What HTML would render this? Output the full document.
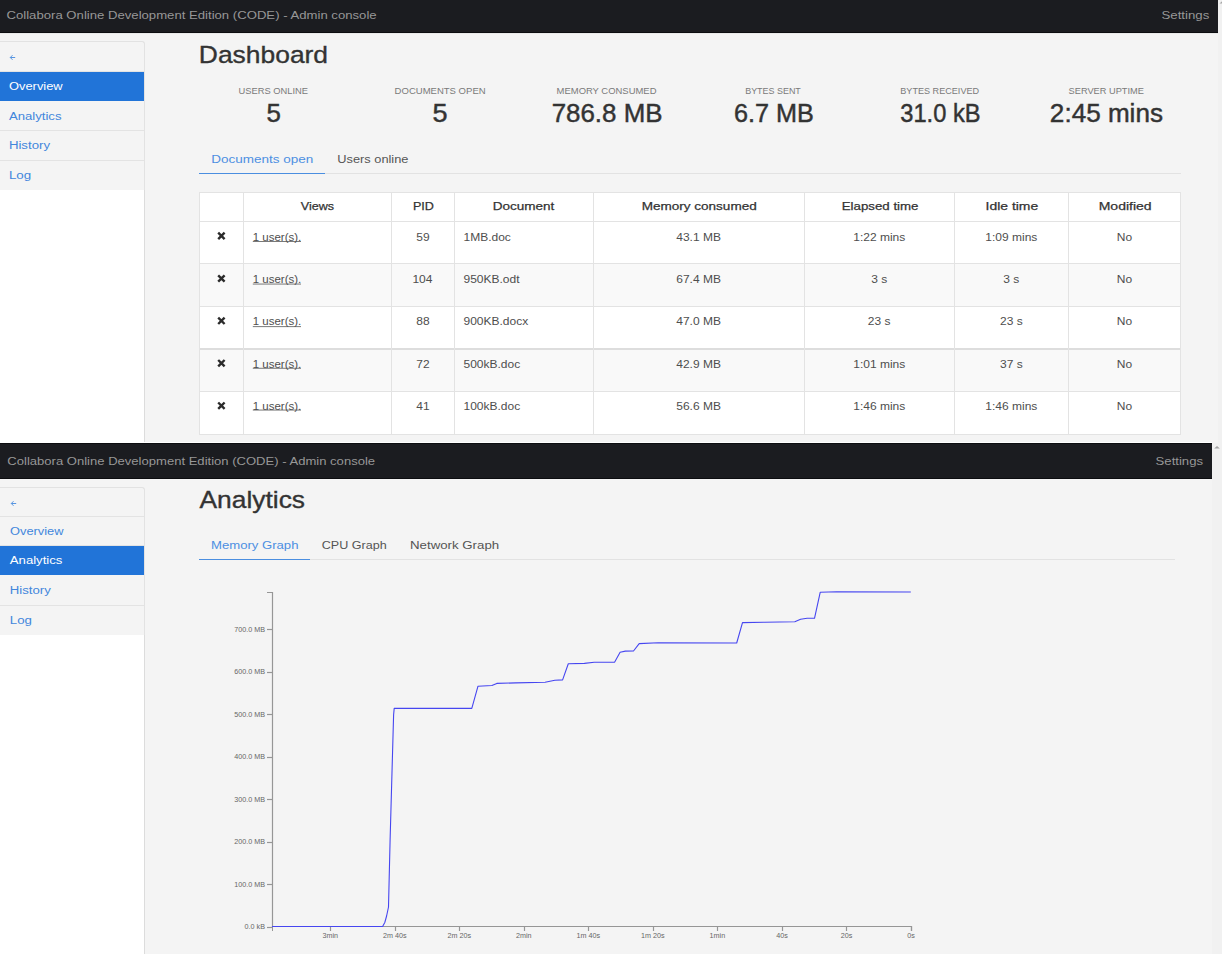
<!DOCTYPE html>
<html><head><meta charset="utf-8">
<style>
html,body{margin:0;padding:0;}
body{width:1222px;height:954px;position:relative;overflow:hidden;background:#f4f4f4;font-family:"Liberation Sans",sans-serif;}
.a{position:absolute;}
.bar{background:#1b1c20;}
.sb{background:#f4f4f4;}
.ln{background:#e3e3e3;}
svg{position:absolute;left:0;top:0;}
text{font-family:"Liberation Sans",sans-serif;}
</style></head><body>
<!-- SECTION 1 -->
<div class="a" style="left:0;top:0;width:1222px;height:443px;background:#f4f4f4"></div>
<div class="a bar" style="left:0;top:0;width:1218px;height:32px;border-bottom:1px solid #0c0d10;"></div>
<div class="a" style="left:1218px;top:0;width:4px;height:443px;background:#f1f1f1"></div>
<svg class="a" width="6" height="8" style="left:1218px;top:0"><path d="M1.5,3.6 L3.8,1.4 L6,3.6 Z" fill="#a3a3a3"/></svg>
<div class="a" style="left:0;top:33px;width:1218px;height:1px;background:#e9e9e9"></div>
<!-- sidebar column -->
<div class="a" style="left:0;top:190px;width:144px;height:253px;background:#ffffff"></div>
<div class="a" style="left:144px;top:44px;width:1px;height:399px;background:#dcdcdc"></div>
<div class="a" style="left:-5px;top:41px;width:148px;height:148px;border:1px solid #e2e2e2;border-bottom:none;border-radius:3px 3px 0 0;background:#f4f4f4"></div>
<div class="a ln" style="left:0;top:71px;width:144px;height:1px"></div>
<div class="a" style="left:0;top:72px;width:144px;height:29px;background:#2174d8"></div>
<div class="a ln" style="left:0;top:130px;width:144px;height:1px"></div>
<div class="a ln" style="left:0;top:160px;width:144px;height:1px"></div>
<!-- back arrow -->
<svg class="a" width="20" height="20" style="left:6px;top:48px"><path d="M4.4,9.5 H9.2 M6.5,7.2 L4.3,9.5 L6.5,11.8" fill="none" stroke="#4489de" stroke-width="0.9"/></svg>
<!-- tabs line -->
<div class="a" style="left:199px;top:173px;width:982px;height:1px;background:#e2e2e2"></div>
<div class="a" style="left:199px;top:172.5px;width:126px;height:1.5px;background:#4a8ee0"></div>
<!-- table -->
<div class="a" style="left:199px;top:192px;width:982px;height:243px;background:#ffffff"></div>
<div class="a" style="left:199px;top:264px;width:982px;height:42px;background:#f9f9f9"></div>
<div class="a" style="left:199px;top:350px;width:982px;height:42px;background:#f9f9f9"></div>
<!-- horizontal borders -->
<div class="a ln" style="left:199px;top:192px;width:982px;height:1px"></div>
<div class="a ln" style="left:199px;top:221px;width:982px;height:1px"></div>
<div class="a ln" style="left:199px;top:263px;width:982px;height:1px"></div>
<div class="a ln" style="left:199px;top:306px;width:982px;height:1px"></div>
<div class="a" style="left:199px;top:348px;width:982px;height:2px;background:#dddddd"></div>
<div class="a ln" style="left:199px;top:391px;width:982px;height:1px"></div>
<div class="a ln" style="left:199px;top:434px;width:982px;height:1px"></div>
<!-- vertical borders -->
<div class="a ln" style="left:199px;top:192px;width:1px;height:243px"></div>
<div class="a ln" style="left:243px;top:192px;width:1px;height:243px"></div>
<div class="a ln" style="left:391px;top:192px;width:1px;height:243px"></div>
<div class="a ln" style="left:454px;top:192px;width:1px;height:243px"></div>
<div class="a ln" style="left:593px;top:192px;width:1px;height:243px"></div>
<div class="a ln" style="left:804px;top:192px;width:1px;height:243px"></div>
<div class="a ln" style="left:954px;top:192px;width:1px;height:243px"></div>
<div class="a ln" style="left:1068px;top:192px;width:1px;height:243px"></div>
<div class="a ln" style="left:1180px;top:192px;width:1px;height:243px"></div>
<!-- x icons & underlines -->
<svg class="a" style="left:0;top:0" width="1222" height="443">
<g stroke="#2b2b2b" stroke-width="2.4" stroke-linecap="butt">
<path d="M218.2,232.7 L224.6,239.1 M224.6,232.7 L218.2,239.1"/>
<path d="M218.2,275.3 L224.6,281.7 M224.6,275.3 L218.2,281.7"/>
<path d="M218.2,317.6 L224.6,324.0 M224.6,317.6 L218.2,324.0"/>
<path d="M218.2,360.0 L224.6,366.4 M224.6,360.0 L218.2,366.4"/>
<path d="M218.2,402.5 L224.6,408.9 M224.6,402.5 L218.2,408.9"/>
</g>
<g fill="#6a6a6a">
<rect x="252.8" y="241" width="48.2" height="0.9"/>
<rect x="252.8" y="283.6" width="48.2" height="0.9"/>
<rect x="252.8" y="326.2" width="48.2" height="0.9"/>
<rect x="252.8" y="367.8" width="48.2" height="0.9"/>
<rect x="252.8" y="409.6" width="48.2" height="0.9"/>
</g>
</svg>

<!-- SECTION 2 -->
<div class="a" style="left:0;top:443px;width:1222px;height:511px;background:#f4f4f4"></div>
<div class="a" style="left:0;top:441px;width:144px;height:2px;background:#ffffff"></div>
<div class="a" style="left:0;top:442px;width:1212px;height:1px;background:#ffffff"></div>
<div class="a bar" style="left:0;top:443px;width:1212px;height:36px;border-top:1px solid #0c0d10;box-sizing:border-box;"></div>
<div class="a" style="left:0;top:478px;width:1212px;height:1px;background:#0c0d10"></div>
<div class="a" style="left:1212px;top:443px;width:10px;height:511px;background:#f1f1f1"></div>
<svg class="a" width="10" height="10" style="left:1212px;top:443px"><path d="M2.2,5.6 L5,2.9 L7.8,5.6 Z" fill="#a3a3a3"/></svg>
<div class="a" style="left:0;top:634px;width:144px;height:320px;background:#ffffff"></div>
<div class="a" style="left:144px;top:490px;width:1px;height:464px;background:#dcdcdc"></div>
<div class="a" style="left:-5px;top:487px;width:148px;height:147px;border:1px solid #e2e2e2;border-bottom:none;border-radius:3px 3px 0 0;background:#f4f4f4"></div>
<div class="a ln" style="left:0;top:516px;width:144px;height:1px"></div>
<div class="a ln" style="left:0;top:545px;width:144px;height:1px"></div>
<div class="a" style="left:0;top:546px;width:144px;height:29px;background:#2174d8"></div>
<div class="a ln" style="left:0;top:605px;width:144px;height:1px"></div>
<svg class="a" width="20" height="20" style="left:6.8px;top:493.5px"><path d="M4.4,9.5 H9.2 M6.5,7.2 L4.3,9.5 L6.5,11.8" fill="none" stroke="#4489de" stroke-width="0.9"/></svg>
<div class="a" style="left:199px;top:559px;width:976px;height:1px;background:#e2e2e2"></div>
<div class="a" style="left:199px;top:558.5px;width:111px;height:1.5px;background:#4a8ee0"></div>

<svg width="1222" height="954" style="left:0;top:0">
<path d="M267,592.5 H272.5 V926.5 H911.5 V931" fill="none" stroke="#969696" stroke-width="1.2"/>
<path d="M267,927.5 H272" stroke="#969696" stroke-width="1.2"/>
<path d="M267,884.5 H272" stroke="#969696" stroke-width="1.2"/>
<path d="M267,842.5 H272" stroke="#969696" stroke-width="1.2"/>
<path d="M267,799.5 H272" stroke="#969696" stroke-width="1.2"/>
<path d="M267,757.5 H272" stroke="#969696" stroke-width="1.2"/>
<path d="M267,714.5 H272" stroke="#969696" stroke-width="1.2"/>
<path d="M267,672.5 H272" stroke="#969696" stroke-width="1.2"/>
<path d="M267,629.5 H272" stroke="#969696" stroke-width="1.2"/>
<path d="M911.5,926.5 V931" stroke="#969696" stroke-width="1.2"/>
<path d="M846.5,926.5 V931" stroke="#969696" stroke-width="1.2"/>
<path d="M782.5,926.5 V931" stroke="#969696" stroke-width="1.2"/>
<path d="M717.5,926.5 V931" stroke="#969696" stroke-width="1.2"/>
<path d="M653.5,926.5 V931" stroke="#969696" stroke-width="1.2"/>
<path d="M588.5,926.5 V931" stroke="#969696" stroke-width="1.2"/>
<path d="M524.5,926.5 V931" stroke="#969696" stroke-width="1.2"/>
<path d="M459.5,926.5 V931" stroke="#969696" stroke-width="1.2"/>
<path d="M395.5,926.5 V931" stroke="#969696" stroke-width="1.2"/>
<path d="M330.5,926.5 V931" stroke="#969696" stroke-width="1.2"/>
<path d="M272.5,931 V926" stroke="#969696" stroke-width="1"/>
<path d="M272.0,926.5 L382.6,926.4 L384.8,922.5 L386.6,916.0 L388.5,907.0 L390.1,840.0 L392.9,740.0 L393.6,715.0 L394.2,708.4 L471.8,708.4 L478.0,686.2 L491.9,685.5 L496.8,683.4 L515.6,682.9 L545.1,682.2 L554.9,680.3 L562.6,679.9 L568.3,663.7 L584.4,663.4 L594.2,662.3 L614.7,662.1 L620.1,652.3 L625.3,651.1 L633.5,651.0 L639.2,643.6 L658.2,642.8 L736.7,643.0 L742.5,622.6 L764.6,622.2 L794.8,621.7 L800.6,619.3 L807.1,618.3 L814.5,618.3 L820.2,592.3 L836.6,591.8 L910.8,592.0" fill="none" stroke="#4646f0" stroke-width="1.1" stroke-linejoin="round"/>
<text x="6.50" y="19.40" textLength="370.11" lengthAdjust="spacingAndGlyphs" font-size="11.6" fill="#979797">Collabora Online Development Edition (CODE) - Admin console</text>
<text x="1161.50" y="19.15" textLength="47.77" lengthAdjust="spacingAndGlyphs" font-size="11.6" fill="#979797">Settings</text>
<text x="9.00" y="90.00" textLength="53.68" lengthAdjust="spacingAndGlyphs" font-size="11.7" fill="#ffffff">Overview</text>
<text x="8.90" y="119.50" textLength="52.62" lengthAdjust="spacingAndGlyphs" font-size="11.7" fill="#4286dc">Analytics</text>
<text x="8.90" y="149.00" textLength="41.12" lengthAdjust="spacingAndGlyphs" font-size="11.7" fill="#4286dc">History</text>
<text x="8.90" y="178.50" textLength="22.27" lengthAdjust="spacingAndGlyphs" font-size="11.7" fill="#4286dc">Log</text>
<text x="198.84" y="63.00" textLength="129.23" lengthAdjust="spacingAndGlyphs" font-size="24.5" fill="#333333" stroke="#333333" stroke-width="0.35">Dashboard</text>
<text x="238.50" y="94.10" textLength="69.50" lengthAdjust="spacingAndGlyphs" font-size="9" fill="#7a7a7a">USERS ONLINE</text>
<text x="266.58" y="122.10" textLength="14.40" lengthAdjust="spacingAndGlyphs" font-size="25.5" fill="#333333" stroke="#333333" stroke-width="0.45">5</text>
<text x="394.60" y="94.10" textLength="91.03" lengthAdjust="spacingAndGlyphs" font-size="9" fill="#7a7a7a">DOCUMENTS OPEN</text>
<text x="432.44" y="122.10" textLength="15.05" lengthAdjust="spacingAndGlyphs" font-size="25.5" fill="#333333" stroke="#333333" stroke-width="0.45">5</text>
<text x="556.60" y="94.10" textLength="99.88" lengthAdjust="spacingAndGlyphs" font-size="9" fill="#7a7a7a">MEMORY CONSUMED</text>
<text x="551.68" y="122.10" textLength="110.84" lengthAdjust="spacingAndGlyphs" font-size="25.5" fill="#333333" stroke="#333333" stroke-width="0.45">786.8 MB</text>
<text x="745.20" y="94.10" textLength="55.60" lengthAdjust="spacingAndGlyphs" font-size="9" fill="#7a7a7a">BYTES SENT</text>
<text x="733.91" y="122.10" textLength="79.89" lengthAdjust="spacingAndGlyphs" font-size="25.5" fill="#333333" stroke="#333333" stroke-width="0.45">6.7 MB</text>
<text x="900.30" y="94.10" textLength="78.79" lengthAdjust="spacingAndGlyphs" font-size="9" fill="#7a7a7a">BYTES RECEIVED</text>
<text x="900.30" y="122.10" textLength="80.24" lengthAdjust="spacingAndGlyphs" font-size="25.5" fill="#333333" stroke="#333333" stroke-width="0.45">31.0 kB</text>
<text x="1068.60" y="94.10" textLength="75.30" lengthAdjust="spacingAndGlyphs" font-size="9" fill="#7a7a7a">SERVER UPTIME</text>
<text x="1049.88" y="122.10" textLength="113.09" lengthAdjust="spacingAndGlyphs" font-size="25.5" fill="#333333" stroke="#333333" stroke-width="0.45">2:45 mins</text>
<text x="211.20" y="162.80" textLength="102.06" lengthAdjust="spacingAndGlyphs" font-size="11.5" fill="#4c8fe2">Documents open</text>
<text x="337.30" y="162.80" textLength="71.14" lengthAdjust="spacingAndGlyphs" font-size="11.5" fill="#555555">Users online</text>
<text x="300.80" y="210.30" textLength="33.28" lengthAdjust="spacingAndGlyphs" font-size="11.6" fill="#333333" stroke="#333333" stroke-width="0.25">Views</text>
<text x="412.90" y="210.30" textLength="21.00" lengthAdjust="spacingAndGlyphs" font-size="11.6" fill="#333333" stroke="#333333" stroke-width="0.25">PID</text>
<text x="492.70" y="210.30" textLength="61.69" lengthAdjust="spacingAndGlyphs" font-size="11.6" fill="#333333" stroke="#333333" stroke-width="0.25">Document</text>
<text x="641.70" y="210.30" textLength="115.02" lengthAdjust="spacingAndGlyphs" font-size="11.6" fill="#333333" stroke="#333333" stroke-width="0.25">Memory consumed</text>
<text x="841.70" y="210.30" textLength="76.81" lengthAdjust="spacingAndGlyphs" font-size="11.6" fill="#333333" stroke="#333333" stroke-width="0.25">Elapsed time</text>
<text x="985.60" y="210.30" textLength="52.64" lengthAdjust="spacingAndGlyphs" font-size="11.6" fill="#333333" stroke="#333333" stroke-width="0.25">Idle time</text>
<text x="1098.70" y="210.30" textLength="52.94" lengthAdjust="spacingAndGlyphs" font-size="11.6" fill="#333333" stroke="#333333" stroke-width="0.25">Modified</text>
<text x="252.80" y="240.50" textLength="48.39" lengthAdjust="spacingAndGlyphs" font-size="11.5" fill="#4e4e4e">1 user(s).</text>
<text x="416.29" y="240.50" textLength="13.34" lengthAdjust="spacingAndGlyphs" font-size="11.5" fill="#4e4e4e">59</text>
<text x="463.50" y="240.50" textLength="47.33" lengthAdjust="spacingAndGlyphs" font-size="11.5" fill="#4e4e4e">1MB.doc</text>
<text x="676.24" y="240.50" textLength="44.67" lengthAdjust="spacingAndGlyphs" font-size="11.5" fill="#4e4e4e">43.1 MB</text>
<text x="853.22" y="240.50" textLength="52.00" lengthAdjust="spacingAndGlyphs" font-size="11.5" fill="#4e4e4e">1:22 mins</text>
<text x="985.32" y="240.50" textLength="52.00" lengthAdjust="spacingAndGlyphs" font-size="11.5" fill="#4e4e4e">1:09 mins</text>
<text x="1116.89" y="240.50" textLength="15.33" lengthAdjust="spacingAndGlyphs" font-size="11.5" fill="#4e4e4e">No</text>
<text x="252.80" y="283.10" textLength="48.39" lengthAdjust="spacingAndGlyphs" font-size="11.5" fill="#4e4e4e">1 user(s).</text>
<text x="412.43" y="283.10" textLength="20.01" lengthAdjust="spacingAndGlyphs" font-size="11.5" fill="#4e4e4e">104</text>
<text x="463.50" y="283.10" textLength="56.02" lengthAdjust="spacingAndGlyphs" font-size="11.5" fill="#4e4e4e">950KB.odt</text>
<text x="676.24" y="283.10" textLength="44.67" lengthAdjust="spacingAndGlyphs" font-size="11.5" fill="#4e4e4e">67.4 MB</text>
<text x="871.22" y="283.10" textLength="16.00" lengthAdjust="spacingAndGlyphs" font-size="11.5" fill="#4e4e4e">3 s</text>
<text x="1003.32" y="283.10" textLength="16.00" lengthAdjust="spacingAndGlyphs" font-size="11.5" fill="#4e4e4e">3 s</text>
<text x="1116.89" y="283.10" textLength="15.33" lengthAdjust="spacingAndGlyphs" font-size="11.5" fill="#4e4e4e">No</text>
<text x="252.80" y="325.40" textLength="48.39" lengthAdjust="spacingAndGlyphs" font-size="11.5" fill="#4e4e4e">1 user(s).</text>
<text x="416.29" y="325.40" textLength="13.34" lengthAdjust="spacingAndGlyphs" font-size="11.5" fill="#4e4e4e">88</text>
<text x="463.50" y="325.40" textLength="64.68" lengthAdjust="spacingAndGlyphs" font-size="11.5" fill="#4e4e4e">900KB.docx</text>
<text x="676.24" y="325.40" textLength="44.67" lengthAdjust="spacingAndGlyphs" font-size="11.5" fill="#4e4e4e">47.0 MB</text>
<text x="867.88" y="325.40" textLength="22.67" lengthAdjust="spacingAndGlyphs" font-size="11.5" fill="#4e4e4e">23 s</text>
<text x="999.98" y="325.40" textLength="22.67" lengthAdjust="spacingAndGlyphs" font-size="11.5" fill="#4e4e4e">23 s</text>
<text x="1116.89" y="325.40" textLength="15.33" lengthAdjust="spacingAndGlyphs" font-size="11.5" fill="#4e4e4e">No</text>
<text x="252.80" y="367.80" textLength="48.39" lengthAdjust="spacingAndGlyphs" font-size="11.5" fill="#4e4e4e">1 user(s).</text>
<text x="416.29" y="367.80" textLength="13.34" lengthAdjust="spacingAndGlyphs" font-size="11.5" fill="#4e4e4e">72</text>
<text x="463.50" y="367.80" textLength="56.68" lengthAdjust="spacingAndGlyphs" font-size="11.5" fill="#4e4e4e">500kB.doc</text>
<text x="676.24" y="367.80" textLength="44.67" lengthAdjust="spacingAndGlyphs" font-size="11.5" fill="#4e4e4e">42.9 MB</text>
<text x="853.22" y="367.80" textLength="52.00" lengthAdjust="spacingAndGlyphs" font-size="11.5" fill="#4e4e4e">1:01 mins</text>
<text x="999.98" y="367.80" textLength="22.67" lengthAdjust="spacingAndGlyphs" font-size="11.5" fill="#4e4e4e">37 s</text>
<text x="1116.89" y="367.80" textLength="15.33" lengthAdjust="spacingAndGlyphs" font-size="11.5" fill="#4e4e4e">No</text>
<text x="252.80" y="410.30" textLength="48.39" lengthAdjust="spacingAndGlyphs" font-size="11.5" fill="#4e4e4e">1 user(s).</text>
<text x="416.29" y="410.30" textLength="13.34" lengthAdjust="spacingAndGlyphs" font-size="11.5" fill="#4e4e4e">41</text>
<text x="463.50" y="410.30" textLength="56.68" lengthAdjust="spacingAndGlyphs" font-size="11.5" fill="#4e4e4e">100kB.doc</text>
<text x="676.24" y="410.30" textLength="44.67" lengthAdjust="spacingAndGlyphs" font-size="11.5" fill="#4e4e4e">56.6 MB</text>
<text x="853.22" y="410.30" textLength="52.00" lengthAdjust="spacingAndGlyphs" font-size="11.5" fill="#4e4e4e">1:46 mins</text>
<text x="985.32" y="410.30" textLength="52.00" lengthAdjust="spacingAndGlyphs" font-size="11.5" fill="#4e4e4e">1:46 mins</text>
<text x="1116.89" y="410.30" textLength="15.33" lengthAdjust="spacingAndGlyphs" font-size="11.5" fill="#4e4e4e">No</text>
<text x="7.30" y="465.10" textLength="367.80" lengthAdjust="spacingAndGlyphs" font-size="11.6" fill="#979797">Collabora Online Development Edition (CODE) - Admin console</text>
<text x="1155.60" y="464.70" textLength="47.47" lengthAdjust="spacingAndGlyphs" font-size="11.6" fill="#979797">Settings</text>
<text x="10.00" y="535.30" textLength="53.49" lengthAdjust="spacingAndGlyphs" font-size="11.7" fill="#4286dc">Overview</text>
<text x="9.80" y="564.30" textLength="52.62" lengthAdjust="spacingAndGlyphs" font-size="11.7" fill="#ffffff">Analytics</text>
<text x="9.80" y="594.00" textLength="40.92" lengthAdjust="spacingAndGlyphs" font-size="11.7" fill="#4286dc">History</text>
<text x="9.80" y="623.50" textLength="22.07" lengthAdjust="spacingAndGlyphs" font-size="11.7" fill="#4286dc">Log</text>
<text x="199.50" y="508.40" textLength="105.57" lengthAdjust="spacingAndGlyphs" font-size="24.5" fill="#333333" stroke="#333333" stroke-width="0.35">Analytics</text>
<text x="211.00" y="549.20" textLength="87.45" lengthAdjust="spacingAndGlyphs" font-size="11.5" fill="#4c8fe2">Memory Graph</text>
<text x="321.80" y="549.20" textLength="64.93" lengthAdjust="spacingAndGlyphs" font-size="11.5" fill="#555555">CPU Graph</text>
<text x="410.00" y="549.20" textLength="89.16" lengthAdjust="spacingAndGlyphs" font-size="11.5" fill="#555555">Network Graph</text>
<text x="265" y="929.20" text-anchor="end" font-size="7.2" fill="#666666">0.0 kB</text>
<text x="265" y="886.70" text-anchor="end" font-size="7.2" fill="#666666">100.0 MB</text>
<text x="265" y="844.20" text-anchor="end" font-size="7.2" fill="#666666">200.0 MB</text>
<text x="265" y="801.70" text-anchor="end" font-size="7.2" fill="#666666">300.0 MB</text>
<text x="265" y="759.20" text-anchor="end" font-size="7.2" fill="#666666">400.0 MB</text>
<text x="265" y="716.70" text-anchor="end" font-size="7.2" fill="#666666">500.0 MB</text>
<text x="265" y="674.20" text-anchor="end" font-size="7.2" fill="#666666">600.0 MB</text>
<text x="265" y="631.70" text-anchor="end" font-size="7.2" fill="#666666">700.0 MB</text>
<text x="911.00" y="938.4" text-anchor="middle" font-size="7.2" fill="#666666">0s</text>
<text x="846.47" y="938.4" text-anchor="middle" font-size="7.2" fill="#666666">20s</text>
<text x="781.94" y="938.4" text-anchor="middle" font-size="7.2" fill="#666666">40s</text>
<text x="717.41" y="938.4" text-anchor="middle" font-size="7.2" fill="#666666">1min</text>
<text x="652.88" y="938.4" text-anchor="middle" font-size="7.2" fill="#666666">1m 20s</text>
<text x="588.35" y="938.4" text-anchor="middle" font-size="7.2" fill="#666666">1m 40s</text>
<text x="523.82" y="938.4" text-anchor="middle" font-size="7.2" fill="#666666">2min</text>
<text x="459.29" y="938.4" text-anchor="middle" font-size="7.2" fill="#666666">2m 20s</text>
<text x="394.76" y="938.4" text-anchor="middle" font-size="7.2" fill="#666666">2m 40s</text>
<text x="330.23" y="938.4" text-anchor="middle" font-size="7.2" fill="#666666">3min</text>
</svg>
</body></html>
